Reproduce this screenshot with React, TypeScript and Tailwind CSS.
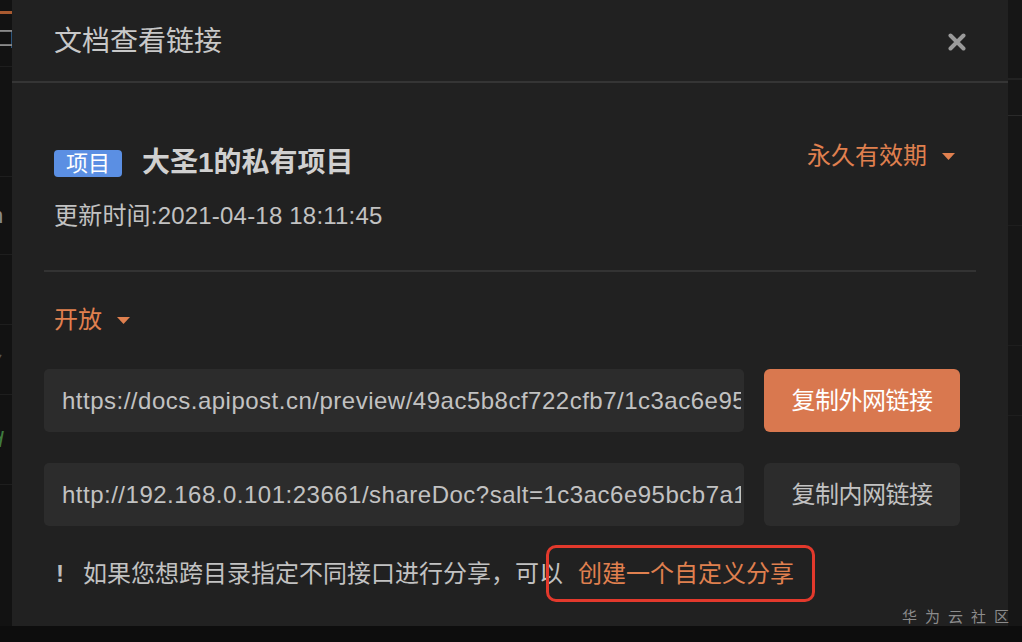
import React from "react";

const font = { fontFamily: '"Liberation Sans", "Noto Sans CJK SC", sans-serif' };

const Caret = () => (
  <svg width="13" height="7" viewBox="0 0 13 7" className="ml-[15px]">
    <path d="M0 0 H13 L6.5 7 Z" fill="#e0804f" />
  </svg>
);

const LeftStrip = () => (
  <div className="w-[12px] h-full bg-[#121212] overflow-hidden flex flex-col text-[#8a8a8a]">
    <div className="h-[3px] mt-[11px] bg-[#a95a30]" />
    <div className="h-[53px] border-b border-[#1e1e1e] text-[22px] leading-[50px] -ml-[6px]">口</div>
    <div className="h-[110px] border-b border-[#1e1e1e]" />
    <div className="h-[78px] border-b border-[#1e1e1e] text-[22px] leading-[78px] -ml-[9px]">h</div>
    <div className="h-[70px] border-b border-[#1e1e1e]" />
    <div className="h-[70px] border-b border-[#1e1e1e] text-[20px] leading-[80px] -ml-[8px] text-[#555]">亻</div>
    <div className="h-[90px] border-b border-[#1e1e1e] text-[22px] leading-[90px] -ml-[9px] text-[#3f7a3f] italic">d</div>
  </div>
);

const RightStrip = () => (
  <div className="w-[14px] h-full bg-[#161616] overflow-hidden flex flex-col">
    <div className="h-[80px] border-b-2 border-[#222]" />
    <div className="h-[36px] border-b border-[#2a2a2a]" />
    <div className="h-[110px] border-b border-[#1e1e1e]" />
    <div className="h-[120px] border-b border-[#1e1e1e]" />
    <div className="h-[70px] border-b border-[#1e1e1e]" />
  </div>
);

const LinkRow = ({ url, label, primary }: { url: string; label: string; primary?: boolean }) => (
  <div className="flex items-center gap-[20px]">
    <div className="w-[700px] h-[63px] rounded-[5px] bg-[#2c2c2c] flex items-center pl-[18px] pr-[3px]">
      <span className="block w-full overflow-hidden whitespace-nowrap text-[24px] tracking-[0.5px] text-[#c2c2c2]">{url}</span>
    </div>
    <button
      className={
        primary
          ? "w-[196px] h-[63px] rounded-[6px] bg-[#d9784f] text-white text-[24px] tracking-[-0.5px]"
          : "w-[196px] h-[63px] rounded-[6px] bg-[#2c2c2c] text-[#c2c2c2] text-[24px] tracking-[-0.5px]"
      }
    >
      {label}
    </button>
  </div>
);

export default function App() {
  return (
    <div className="w-[1022px] h-[642px] bg-[#0d0d0d] overflow-hidden relative" style={font}>
      <div className="flex h-[626px]">
        <LeftStrip />
        <div className="w-[996px] h-full bg-[#212121] flex flex-col">
          <div className="h-[83px] border-b-2 border-[#353535] flex items-center justify-between pl-[42px] pr-[42px]">
            <h1 className="text-[28px] text-[#c8c8c8] -mb-[2px]">文档查看链接</h1>
            <svg width="18" height="18" viewBox="0 0 18 18" className="mt-[2px]">
              <path d="M2.5 2.5 L15.5 15.5 M15.5 2.5 L2.5 15.5" stroke="#9a9a9a" strokeWidth="4" strokeLinecap="round" />
            </svg>
          </div>

          <div className="px-[32px] flex flex-col">
            <div className="pl-[10px] pr-[21px] pt-[59px] flex items-center justify-between">
              <div className="flex items-center">
                <span className="h-[27px] px-[12px] rounded-[4px] bg-[#5b8fe3] text-white text-[22px] leading-[27px]">项目</span>
                <span className="ml-[20px] text-[28px] font-bold text-[#d0d0d0]">大圣1的私有项目</span>
              </div>
              <div className="flex items-center text-[24px] text-[#e0804f] -mt-[14px]">
                永久有效期
                <Caret />
              </div>
            </div>
            <div className="pl-[10px] mt-[17px] text-[24px] tracking-[0.2px] text-[#c2c2c2] leading-[30px]">
              更新时间:2021-04-18 18:11:45
            </div>
            <div className="mt-[39px] h-[2px] bg-[#333]" />

            <div className="pl-[10px] mt-[33px] flex items-center text-[24px] text-[#e0804f] leading-[30px]">
              开放
              <Caret />
            </div>

            <div className="mt-[34px] flex flex-col gap-[31px]">
              <LinkRow url="https://docs.apipost.cn/preview/49ac5b8cf722cfb7/1c3ac6e95bcb7a1" label="复制外网链接" primary />
              <LinkRow url="http://192.168.0.101:23661/shareDoc?salt=1c3ac6e95bcb7a1c3ac6e9" label="复制内网链接" />
            </div>

            <div className="pl-[10px] mt-[33px] flex items-center text-[22px] text-[#c2c2c2] leading-[30px]">
              <span className="font-bold text-[24px] text-[#bdbdbd] w-[29px] pl-[2px]">!</span>
              <span className="text-[24px]">如果您想跨目录指定不同接口进行分享，可以</span>
              <span className="relative ml-[15px] text-[24px] text-[#e0804f]">
                创建一个自定义分享
                <span className="absolute -left-[32px] -right-[21px] -top-[14px] -bottom-[13px] border-[3px] border-[#e3392c] rounded-[10px]" />
              </span>
            </div>
          </div>
        </div>
        <RightStrip />
      </div>
      <div className="absolute right-[5px] bottom-[16px] text-[15px] tracking-[8px] text-[#8c8c8c] leading-[18px]">
        华为云社区
      </div>
    </div>
  );
}
